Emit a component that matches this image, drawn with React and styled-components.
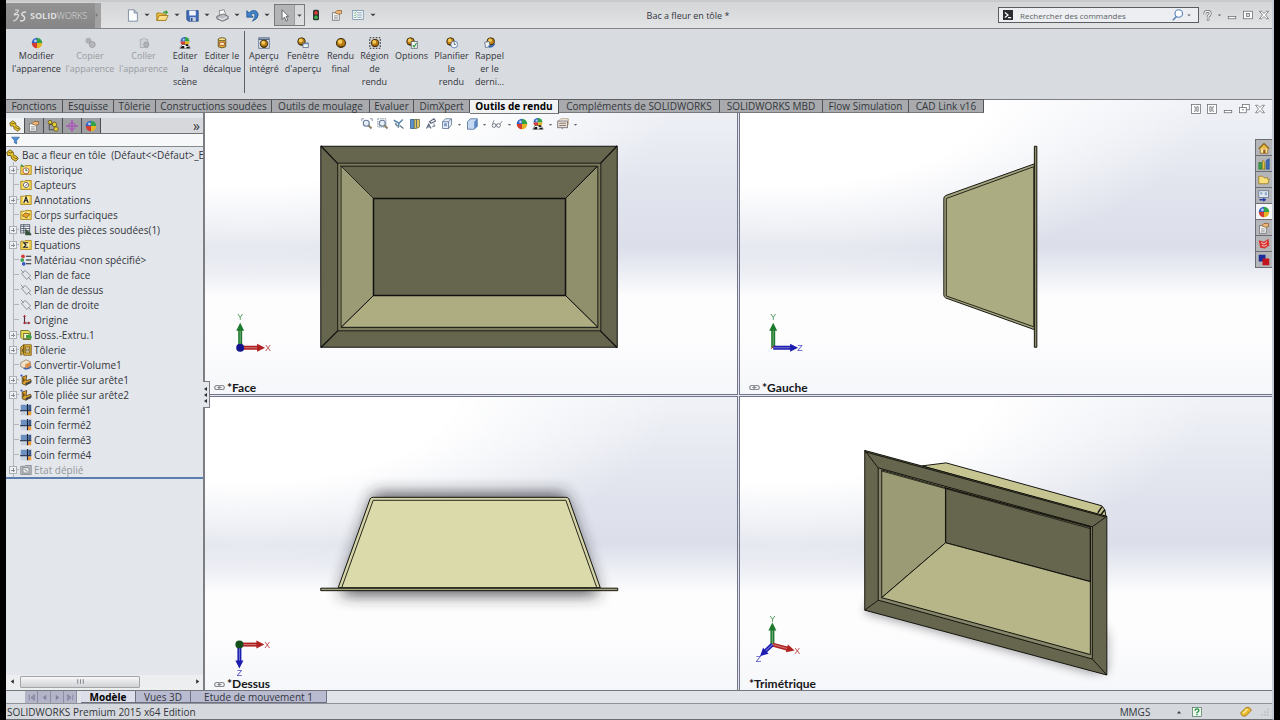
import React, { useState } from "react";
import styled, { createGlobalStyle, css } from "styled-components";

const GlobalStyle = createGlobalStyle`
  * {
    box-sizing: border-box;
  }
  body {
    margin: 0;
    background: #000;
    color: #33363c;
    font-family: "Open Sans", "Noto Sans", sans-serif;
    font-size: 10px;
  }
  button, input {
    font-family: inherit;
    color: inherit;
  }
`;

const AppWindow = styled.div`
  display: grid;
  grid-template-rows: 27px 70px minmax(0, 1fr) 14px 15px;
  height: 100vh;
  min-height: 480px;
  margin: 0 6px;
  border-top: 2px solid #c9cacc;
  border-bottom: 1px solid #6d6f73;
  border-right: 2px solid #c3cad8;
  background: #d8dbe0;
`;

/* ---------- title bar ---------- */

const TitleBar = styled.header`
  display: flex;
  align-items: center;
  background: linear-gradient(#d4d5d7, #e2e3e5);
  border-bottom: 1px solid #83858b;
`;

const Brand = styled.div`
  display: flex;
  align-items: center;
  width: 95px;
  height: 25px;
  padding-left: 6px;
  background: linear-gradient(#929292, #868686);
  color: #dedede;
  font-size: 9px;
  svg {
    margin-right: 3px;
  }
  span {
    font-weight: 300;
  }
  b {
    font-weight: 700;
  }
`;

const BrandToggle = styled.button`
  display: flex;
  align-items: center;
  width: 6px;
  height: 25px;
  margin-left: auto;
  padding: 0;
  border: none;
  background: #a2a2a2;
`;

const QuickAccess = styled.nav`
  display: flex;
  align-items: center;
  height: 22px;
  margin-left: 23px;
`;

const QuickButton = styled.button`
  display: flex;
  align-items: center;
  justify-content: center;
  width: ${(p) => p.$width || 16}px;
  height: 22px;
  padding: 0;
  border: none;
  background: none;
`;

const SelectGroup = styled.div`
  display: flex;
  border: 1px solid #77797d;
  button {
    height: 20px;
  }
  button:first-child {
    background: #b3b4b6;
    border-right: 1px solid #9a9b9e;
  }
`;

const DocTitle = styled.h1`
  flex: 1;
  margin: 0;
  text-align: center;
  font-size: 9px;
  font-weight: 400;
`;

const SearchBox = styled.label`
  display: flex;
  align-items: center;
  width: 201px;
  height: 16px;
  padding: 0 4px;
  border: 1px solid #5b5d63;
  background: #eceef1;
  input {
    flex: 1;
    min-width: 0;
    margin: 0 0 0 7px;
    padding: 0;
    border: none;
    background: none;
    font-size: 8px;
    outline: none;
  }
  input::placeholder {
    color: #5c5f66;
    opacity: 1;
  }
`;

const WindowControls = styled.div`
  display: flex;
  align-items: center;
`;

/* ---------- ribbon ---------- */

const Ribbon = styled.div`
  display: flex;
  align-items: flex-start;
  padding: 2px 4px;
  background: #d8dbe0;
`;

const RibbonButton = styled.button`
  display: flex;
  flex-direction: column;
  align-items: center;
  width: ${(p) => p.$width}px;
  height: 64px;
  padding: 6px 0 0;
  border: none;
  background: none;
  font-size: 9px;
  line-height: 13px;
  white-space: pre;
  svg {
    flex: none;
  }
  &:disabled {
    color: #9a9ca1;
  }
`;

const RibbonSeparator = styled.div`
  width: 1px;
  height: 62px;
  background: #5f6166;
`;

/* ---------- work area ---------- */

const WorkArea = styled.main`
  display: grid;
  grid-template-columns: 199px minmax(0, 1fr);
  grid-template-rows: 14px minmax(0, 1fr);
  min-height: 0;
`;

const CommandTabs = styled.nav`
  display: flex;
  grid-area: 1 / 1 / 2 / 3;
  justify-self: start;
  z-index: 1;
  border-top: 1px solid #606165;
`;

const CommandTab = styled.button`
  width: ${(p) => p.$width}px;
  height: 13px;
  padding: 0 0 1px;
  border: none;
  border-right: 1px solid #515256;
  border-bottom: 1px solid #77787b;
  background: #a8aaad;
  font-size: 10px;
  line-height: 10px;
  white-space: nowrap;
  ${(p) =>
    p.$active &&
    css`
      height: 14px;
      padding-bottom: 2px;
      background: #f1f2f4;
      color: #000;
      font-weight: 700;
    `}
`;

const SidePanel = styled.aside`
  position: relative;
  display: flex;
  flex-direction: column;
  grid-area: 2 / 1 / 3 / 2;
  min-height: 0;
  padding-top: 5px;
  border-right: 2px solid #7c7e84;
  background: #e3e6eb;
`;

const PanelTabs = styled.div`
  display: flex;
  align-items: stretch;
  height: 16px;
  background: #d6d8dc;
  border-bottom: 1px solid #6f7074;
`;

const PanelTab = styled.button`
  display: flex;
  align-items: center;
  justify-content: center;
  width: 19px;
  padding: 0;
  border: none;
  border-right: 1px solid #4c4d50;
  background: ${(p) => (p.$active ? "#f0f1f3" : "#9fa0a3")};
`;

const MoreTabs = styled.button`
  margin-left: auto;
  padding: 0 3px;
  border: none;
  background: none;
  font-size: 14px;
  line-height: 10px;
`;

const FilterBox = styled.label`
  display: flex;
  align-items: center;
  height: 13px;
  padding-left: 5px;
  border-bottom: 1px solid #85878b;
  background: #f7f8f9;
  input {
    flex: 1;
    min-width: 0;
    height: 11px;
    margin: 0;
    padding: 0 4px;
    border: none;
    background: none;
    font-size: 9px;
    outline: none;
  }
`;

const Tree = styled.ul`
  margin: 0;
  padding: 1px 0 0;
  list-style: none;
  border-bottom: 2px solid #5c7db0;
  overflow: hidden;
`;

const TreeRow = styled.li`
  display: flex;
  align-items: center;
  height: ${(p) => (p.$root ? 14 : 15)}px;
  font-size: 10px;
  white-space: pre;
  color: ${(p) => (p.$muted ? "#94979c" : "#33363c")};
  svg {
    flex: none;
    margin-right: ${(p) => (p.$root ? 3 : 2)}px;
  }
`;

const Branch = styled.span`
  position: relative;
  flex: none;
  width: 14px;
  height: 15px;
  background: linear-gradient(#b4b6bb, #b4b6bb) 7px 0 / 1px 100% no-repeat,
    linear-gradient(#b4b6bb, #b4b6bb) 7px 7px / 6px 1px no-repeat;
`;

const Expander = styled.button`
  position: absolute;
  top: 4px;
  left: 3px;
  width: 8px;
  height: 8px;
  padding: 0;
  border: 1px solid #adb0b6;
  background: linear-gradient(#868b94, #868b94) center / 4px 1px no-repeat,
    linear-gradient(#868b94, #868b94) center / 1px 4px no-repeat, #eef0f3;
`;

const PanelHandle = styled.button`
  position: absolute;
  z-index: 2;
  top: 268px;
  right: -7px;
  display: flex;
  align-items: center;
  width: 7px;
  height: 27px;
  padding: 0;
  border: 1px solid #7c7e84;
  border-left: none;
  background: #e3e6eb;
`;

const ScrollBar = styled.div`
  display: flex;
  align-items: center;
  height: 15px;
  margin-top: auto;
  padding-bottom: 2px;
  background: #eceef0;
`;

const ScrollArrow = styled.button`
  display: flex;
  justify-content: center;
  width: 12px;
  padding: 0;
  border: none;
  background: none;
`;

const ScrollThumb = styled.div`
  display: flex;
  align-items: center;
  justify-content: center;
  width: 120px;
  height: 12px;
  margin: 0 auto 0 2px;
  border: 1px solid #a2a4a8;
  border-radius: 1px;
  background: linear-gradient(#f7f7f8, #cfd1d4);
`;

/* ---------- viewports ---------- */

const Viewports = styled.section`
  display: grid;
  grid-area: 1 / 2 / 3 / 3;
  grid-template-columns: 1fr 1fr;
  grid-template-rows: 1fr 1fr;
  gap: 1px;
  min-height: 0;
  border-top: 1px solid #7b7d82;
  background: #e3e5ec;
`;

const Pane = styled.div`
  position: relative;
  min-width: 0;
  min-height: 0;
  overflow: hidden;
  border: 0 solid #74778c;
  border-width: ${(p) => p.$edges};
  background: radial-gradient(
      ellipse 80% 60% at 8% 0,
      #fff 48%,
      rgba(255, 255, 255, 0) 100%
    ),
    linear-gradient(
      #f0f2f7 0,
      #e2e5ee 28%,
      #dcdfea 50%,
      #e9ebf2 57%,
      #fdfdfe 67%,
      #fdfdfe 80%,
      #f6f7fa 100%
    );
`;

const Canvas = styled.svg`
  display: block;
  width: 100%;
  height: 100%;
`;

const ViewName = styled.div`
  position: absolute;
  left: 9px;
  bottom: 0;
  display: flex;
  align-items: center;
  gap: 2px;
  color: #16171a;
  font-family: Lato, sans-serif;
  font-size: 12px;
  font-weight: 700;
  line-height: 12px;
`;

const HeadsUpBar = styled.div`
  position: absolute;
  top: 17px;
  left: 0;
  right: 3px;
  display: flex;
  justify-content: center;
`;

const HudButton = styled.button`
  display: flex;
  align-items: center;
  justify-content: center;
  width: ${(p) => (p.$narrow ? 9 : 16)}px;
  height: 14px;
  padding: 0;
  border: none;
  background: none;
`;

const DocControls = styled.div`
  position: absolute;
  top: 2px;
  right: 4px;
  display: flex;
`;

const TaskPane = styled.div`
  position: absolute;
  top: 39px;
  right: 0;
  width: 17px;
  border: 1px solid #6b6d72;
  border-width: 1px 0 0 1px;
`;

const TaskButton = styled.button`
  display: flex;
  align-items: center;
  justify-content: center;
  width: 16px;
  height: 16px;
  padding: 0;
  border: none;
  border-bottom: 1px solid #6b6d72;
  background: ${(p) => (p.$active ? "#f4f5f7" : "#b5b6b9")};
`;

/* ---------- bottom bars ---------- */

const ModelTabs = styled.nav`
  display: flex;
  align-items: flex-start;
  padding-left: 19px;
  border-top: 1px solid #75777c;
  border-bottom: 1px solid #8f9297;
  background: #e1e4e8;
`;

const Steps = styled.div`
  display: flex;
  margin-right: 4px;
`;

const StepButton = styled.button`
  display: flex;
  align-items: center;
  justify-content: center;
  width: 13px;
  height: 12px;
  padding: 0;
  border: none;
  border-right: 1px solid #8d8ea3;
  background: #b3b4c8;
`;

const ModelTab = styled.button`
  width: ${(p) => p.$width}px;
  height: 12px;
  padding: 0;
  border: none;
  border-right: 1px solid #6f7083;
  border-bottom: 1px solid #6f7083;
  background: ${(p) => (p.$active ? "#dcdeea" : "#b9bbd0")};
  color: ${(p) => (p.$active ? "#000" : "#33363c")};
  font-size: 10px;
  font-weight: ${(p) => (p.$active ? 700 : 400)};
  line-height: 10px;
`;

const StatusBar = styled.footer`
  display: flex;
  align-items: center;
  padding: 0 3px 0 1px;
  background: #d5d8dc;
  font-size: 10px;
  line-height: 14px;
`;

const StatusItem = styled.span`
  display: flex;
  justify-content: center;
  width: ${(p) => p.$width}px;
  margin-left: ${(p) => p.$gap || 0}px;
  &:nth-child(2) {
    margin-left: auto;
  }
`;

/* ---------- icons ---------- */

const Ball = ({ x = 8, y = 8, r = 7 }) => (
  <g transform={`translate(${x} ${y}) scale(${r})`}>
    <path d="M0 0V-1A1 1 0 0 0-1 0Z" fill="#2f62c9" />
    <path d="M0 0V-1A1 1 0 0 1 1 0Z" fill="#2fa24a" />
    <path d="M0 0H1A1 1 0 0 1 0 1Z" fill="#e6b422" />
    <path d="M0 0H-1A1 1 0 0 0 0 1Z" fill="#d63b2f" />
    <circle cx="-.3" cy="-.4" r=".25" fill="#fff" opacity=".7" />
  </g>
);

const Gold = ({ x = 8, y = 8, r = 5 }) => (
  <g transform={`translate(${x} ${y}) scale(${r})`}>
    <circle r="1" fill="#b97c12" stroke="#3d2f14" strokeWidth=".25" />
    <circle cx="-.2" cy="-.3" r=".5" fill="#f3c95a" />
    <path d="M-.8 .5Q0 1 .8 .5L.5 .9Q0 1.1-.5 .9Z" fill="#453215" />
  </g>
);

const Folder = ({ children }) => (
  <>
    <path d="M1 3H6L7 2H15V14H1Z" fill="#f4d34f" stroke="#9c7b16" />
    <rect x="4" y="4" width="8" height="8" fill="#fbf0b0" />
    {children}
  </>
);

const Part = () => (
  <>
    <path
      d="M1 4L5 1L9 4V7L13 9L15 12L12 15L7 12L6 8L2 8Z"
      fill="#eec92e"
      stroke="#59480b"
    />
    <path d="M3 4L5 5L8 4M8 9L12 12L14 11" fill="none" stroke="#59480b" />
  </>
);

const Sheet = () => (
  <>
    <rect x="2" y="5" width="9" height="10" fill="#f5f5f3" stroke="#6c6d70" />
    <path d="M4 9H9M4 11H9M4 13H9" stroke="#8c8d92" />
    <path d="M5 5L8 2H14V6L10 7Z" fill="#eeb578" stroke="#875c2c" />
  </>
);

const Magnifier = () => (
  <>
    <circle cx="7" cy="7" r="4" fill="#e5eef9" stroke="#687b97" strokeWidth="1.5" />
    <path d="M10 10L14 14" stroke="#8e8268" strokeWidth="2.5" />
  </>
);

const icons = {
  newDoc: <path d="M3 1H10L14 5V15H3ZM10 1V5H14" fill="#fbfcfd" stroke="#6d7f98" />,
  open: (
    <>
      <path d="M1 14V5H6L7 6H12V14Z" fill="#f0c13c" stroke="#9b7412" />
      <path d="M1 14L4 8H15L12 14Z" fill="#fae08a" stroke="#9b7412" />
      <path d="M8 5Q9 2 12 3V1L15 4L12 7V5Q10 4 8 5Z" fill="#3e9f3a" />
    </>
  ),
  save: (
    <>
      <path d="M1 2H15V15H3L1 13Z" fill="#3f6cb8" stroke="#2a4a88" />
      <rect x="4" y="2" width="8" height="6" fill="#f1f5fb" />
      <rect x="5" y="10" width="7" height="5" fill="#c7d0df" />
      <rect x="6" y="11" width="2" height="4" fill="#2a4a88" />
    </>
  ),
  print: (
    <>
      <path d="M5 8L4 2L10 1L12 7" fill="#fff" stroke="#777" />
      <path d="M1 9L9 6L15 9V12L8 15L1 12Z" fill="#b9bcc2" stroke="#5d6066" />
      <path d="M4 11L8 13L13 10" fill="none" stroke="#fff" />
    </>
  ),
  undo: (
    <path
      d="M1 2V10H9L6 7Q10 4 11 7Q12 10 8 15Q15 12 15 7Q14 1 8 2Q6 2 4 5Z"
      fill="#3f82c8"
      stroke="#225793"
    />
  ),
  cursor: <path d="M5 1V13L8 10L10 15L12 14L10 9H13Z" fill="#fff" stroke="#505256" />,
  traffic: (
    <>
      <rect x="4" y="1" width="8" height="14" rx="2" fill="#2e3531" />
      <circle cx="8" cy="5" r="2.5" fill="#e03a35" />
      <circle cx="8" cy="11" r="2.5" fill="#34b14a" />
    </>
  ),
  sheet: <Sheet />,
  checklist: (
    <>
      <rect x="1" y="2" width="14" height="12" fill="#f5f9fc" stroke="#6989a6" />
      <path d="M7 5H13M7 8H13M7 11H13" stroke="#6989a6" />
      <path d="M3 5L4 6L6 3M3 8L4 9L6 7M3 11L4 12L6 10" fill="none" stroke="#3c9a4b" />
    </>
  ),
  caret: <path d="M4 6H12L8 10Z" fill="#3e4045" />,
  smallCaret: <path d="M5 7H11L8 10Z" fill="#65686f" />,
  prompt: (
    <>
      <rect width="16" height="16" fill="#2a2c30" />
      <path d="M3 4L8 8L3 12M8 12H13" fill="none" stroke="#fff" strokeWidth="2" />
    </>
  ),
  lookup: (
    <>
      <circle cx="9" cy="6" r="5" fill="#fff" stroke="#5580b5" strokeWidth="1.5" />
      <path d="M6 10L1 15" stroke="#5580b5" strokeWidth="2" />
    </>
  ),
  question: (
    <>
      <path
        d="M4 6Q4 2 8 2Q12 2 12 5Q12 7 9 9V11"
        fill="none"
        stroke="#66696f"
        strokeWidth="4"
      />
      <path d="M4 6Q4 2 8 2Q12 2 12 5Q12 7 9 9V11" fill="none" stroke="#f4f4f5" strokeWidth="2" />
      <circle cx="9" cy="14" r="1.5" fill="#f4f4f5" stroke="#66696f" />
    </>
  ),
  minimize: <rect x="3" y="10" width="10" height="3" fill="#fff" stroke="#66696f" />,
  maximize: (
    <>
      <rect x="2" y="3" width="12" height="10" fill="#fff" stroke="#66696f" />
      <rect x="6" y="6" width="4" height="4" fill="#d8dbe0" stroke="#66696f" />
    </>
  ),
  close: (
    <path
      d="M2 3H5L8 6L11 3H14L10 8L14 13H11L8 10L5 13H2L6 8Z"
      fill="#fff"
      stroke="#66696f"
    />
  ),
  restore: (
    <>
      <rect x="6" y="2" width="9" height="7" fill="#fff" stroke="#66696f" />
      <rect x="2" y="6" width="9" height="7" fill="#fff" stroke="#66696f" />
      <path d="M5 9H8" stroke="#66696f" />
    </>
  ),
  tileIn: (
    <>
      <rect x="2" y="2" width="12" height="12" fill="#fff" stroke="#66696f" />
      <path d="M5 5H7V11H5M9 5H11V11H9Z" fill="none" stroke="#66696f" />
    </>
  ),
  tileOut: (
    <>
      <rect x="2" y="2" width="12" height="12" fill="#fff" stroke="#66696f" />
      <path d="M5 5H7V11H5ZM11 5H9V11H11" fill="none" stroke="#66696f" />
    </>
  ),
  ball: <Ball />,
  copyLook: (
    <>
      <circle cx="6" cy="5" r="4" fill="#aeb0b4" />
      <circle cx="11" cy="10" r="4" fill="#b5b7ba" stroke="#96989c" />
    </>
  ),
  pasteLook: (
    <>
      <path d="M3 3H6L8 1L10 3H13V14H3Z" fill="#cfd1d4" stroke="#a4a6aa" />
      <circle cx="11" cy="10" r="3.5" fill="#b0b2b6" stroke="#9a9ca0" />
    </>
  ),
  scene: (
    <>
      <Ball y={6} r={6} />
      <path d="M1 15L4 10H12L15 15Z" fill="#f7f7f7" stroke="#333" strokeWidth=".7" />
      <path d="M4 12H7V15H2ZM9 10H12V12H9ZM10 13H14V15H10Z" fill="#111" />
    </>
  ),
  decal: (
    <>
      <path d="M3 3V13Q8 16 13 13V3Z" fill="#e0b43c" stroke="#4a3c12" />
      <ellipse cx="8" cy="3" rx="5" ry="2" fill="#f8e28c" stroke="#4a3c12" />
      <rect x="5" y="7" width="6" height="4" fill="#fff4c8" stroke="#a13a22" />
    </>
  ),
  preview: (
    <>
      <rect x="1" y="1" width="14" height="14" fill="#dfe4ec" stroke="#54657e" />
      <path d="M1 3H15" stroke="#54657e" strokeWidth="2" />
      <Gold y={9} r={5} />
    </>
  ),
  previewWindow: (
    <>
      <Gold x={6} y={6} r={5} />
      <rect x="8" y="8" width="7" height="6" fill="#eef2f7" stroke="#54657e" />
      <path d="M8 9H15" stroke="#3b66a8" />
    </>
  ),
  gold: <Gold r={6} />,
  region: (
    <>
      <Gold r={5} />
      <rect x="1" y="1" width="14" height="14" fill="none" stroke="#222" strokeWidth="1.5" strokeDasharray="2 2" />
    </>
  ),
  goldOptions: (
    <>
      <Gold x={6} y={6} r={5} />
      <rect x="7" y="6" width="8" height="9" fill="#f4f8f4" stroke="#56606c" />
      <path d="M9 11L11 13L14 8" fill="none" stroke="#2c9440" strokeWidth="1.5" />
    </>
  ),
  goldClock: (
    <>
      <Gold x={6} y={6} r={5} />
      <circle cx="11" cy="10" r="4.5" fill="#f3f7fc" stroke="#456ba2" />
      <path d="M11 7V10H13" fill="none" stroke="#345" />
    </>
  ),
  goldRecall: (
    <>
      <Gold x={9} y={6} r={5} />
      <path d="M1 7L7 6L8 13L2 14Z" fill="#eff2f6" stroke="#54657e" />
      <path d="M6 12Q11 15 14 9" fill="none" stroke="#2b65b8" strokeWidth="2" />
    </>
  ),
  part: <Part />,
  config: (
    <>
      <path d="M3 2V13H9M3 6H9" fill="none" stroke="#2f3034" />
      <circle cx="4" cy="3" r="2.5" fill="#e5cf3b" stroke="#59480b" />
      <circle cx="10" cy="6" r="3" fill="#e5cf3b" stroke="#59480b" />
      <circle cx="12" cy="12" r="3" fill="#e5cf3b" stroke="#59480b" />
    </>
  ),
  target: (
    <g fill="none" stroke="#b23fc0">
      <circle cx="8" cy="8" r="4.5" />
      <path d="M8 0V16M0 8H16" strokeWidth="1.5" />
    </g>
  ),
  funnel: <path d="M1 2H15L10 8V14L6 12V8Z" fill="#4e8fd6" stroke="#23568f" />,
  history: (
    <Folder>
      <circle cx="8" cy="9" r="4" fill="#fff" stroke="#a42c2c" />
      <path d="M8 6V9H10M1 1L5 4" fill="none" stroke="#2d8c3a" strokeWidth="1.5" />
    </Folder>
  ),
  sensors: (
    <Folder>
      <circle cx="8" cy="8" r="3.5" fill="#fff" stroke="#444" />
      <path d="M7 10L10 6" stroke="#444" />
    </Folder>
  ),
  notes: (
    <Folder>
      <path d="M5 12L8 4L11 12M6 9H10" fill="none" stroke="#1d1d20" strokeWidth="1.5" />
    </Folder>
  ),
  surfaces: (
    <Folder>
      <path d="M3 9L7 5L13 7L9 12Z" fill="#eaa02c" stroke="#754d0c" />
    </Folder>
  ),
  cutList: (
    <>
      <rect x="1" y="1" width="12" height="11" fill="#f2f4f8" stroke="#3c4657" />
      <path d="M1 3H13M1 6H13M1 9H13M5 1V12" stroke="#3c4657" />
      <path d="M7 6L15 13V15H7Z" fill="#37523a" />
    </>
  ),
  equations: (
    <Folder>
      <path d="M11 5H5L8 8L5 11H11" fill="none" stroke="#1d1d20" strokeWidth="1.5" />
    </Folder>
  ),
  material: (
    <>
      <circle cx="4" cy="3" r="2.5" fill="#d23a3a" />
      <circle cx="3" cy="8" r="2.5" fill="#3a9f47" />
      <circle cx="5" cy="13" r="2.5" fill="#3558c2" />
      <path d="M8 3H15M8 8H15M8 13H15" stroke="#222" strokeWidth="1.5" />
    </>
  ),
  plane: (
    <path d="M2 6L7 2L14 9L9 14ZM1 1L5 5M11 11L15 15" fill="none" stroke="#74777e" />
  ),
  origin: (
    <>
      <path d="M6 2V12H13" fill="none" stroke="#5e2630" strokeWidth="1.5" />
      <path d="M4 4L6 1L8 4M11 10L14 12L11 14" fill="#b32b34" />
      <circle cx="6" cy="12" r="1.5" fill="#b32b34" />
    </>
  ),
  extrude: (
    <>
      <path d="M1 2H11L14 5V14H4L1 11Z" fill="#e9dc55" stroke="#4c511a" />
      <rect x="5" y="6" width="7" height="7" fill="#fafbd8" stroke="#4c511a" />
      <path d="M8 8H13V6L16 11L13 15V12H8Z" fill="#39a23f" />
    </>
  ),
  sheetMetal: (
    <>
      <path d="M1 4L5 1V12L1 15ZM5 1H15V15H5Z" fill="#e9b83a" stroke="#65490e" />
      <rect x="7" y="4" width="6" height="8" fill="#f8e6a1" stroke="#65490e" />
      <path d="M9 6V10M11 6V10M3 6V11" stroke="#333" />
    </>
  ),
  convert: (
    <>
      <path d="M1 5L8 1L14 4V10L7 13L1 10Z" fill="#f0e2c8" stroke="#8b765a" />
      <path d="M7 7L14 4V10L7 13Z" fill="#d98f4a" />
      <path d="M5 12Q10 15 15 10" fill="none" stroke="#4765a6" strokeWidth="2" />
    </>
  ),
  bend: (
    <>
      <path d="M3 4L9 2L8 9L14 7L15 10L8 15L3 13Z" fill="#e8a92c" stroke="#402f0d" />
      <path d="M7 12L15 9V12L8 15Z" fill="#444" />
      <path d="M5 5V11M4 8H7" stroke="#402f0d" />
      <circle cx="2" cy="2" r="1.5" fill="#3558c2" />
    </>
  ),
  corner: (
    <>
      <path d="M1 1H10V9H1Z" fill="#6c8fc2" />
      <path d="M11 1H15V9H11Z" fill="#3f5c8c" />
      <path d="M1 10H9V15H1Z" fill="#c6d1e2" />
      <path d="M10 10H15V15H10Z" fill="#f09a33" />
      <path d="M10 0V15M0 9H15" stroke="#17233a" strokeWidth="1.5" />
    </>
  ),
  flat: (
    <>
      <path d="M1 3H6L7 2H15V14H1Z" fill="#b9bcc2" stroke="#7d8087" />
      <rect x="4" y="5" width="8" height="7" fill="#e7e8ea" stroke="#7d8087" />
      <path d="M6 7L10 10" stroke="#666" />
    </>
  ),
  zoomFit: (
    <>
      <Magnifier />
      <path d="M1 4V1H4M12 1H15V4" fill="none" stroke="#687b97" />
    </>
  ),
  zoomArea: (
    <>
      <rect x="1" y="1" width="11" height="11" fill="none" stroke="#687b97" strokeDasharray="2 1" />
      <Magnifier />
    </>
  ),
  previous: (
    <>
      <path d="M1 3L8 7L13 2M8 7L7 13" fill="none" stroke="#5c87ae" strokeWidth="2" />
      <path d="M9 10L14 14M3 7L6 11" stroke="#708090" strokeWidth="2" />
    </>
  ),
  section: (
    <>
      <path d="M2 2H7V14H2Z" fill="#5b93ce" stroke="#2c5785" />
      <path d="M7 2H14V12L10 14H7Z" fill="#e0c35e" stroke="#5e6e49" />
      <path d="M10 2V13" stroke="#2c5785" />
    </>
  ),
  dynamic: (
    <>
      <path d="M2 14L5 8L8 14M3 12H7M6 5L12 1L14 4L8 7Z" fill="none" stroke="#5f6b7e" strokeWidth="1.5" />
      <path d="M9 12L14 10M12 7V12" stroke="#5f6b7e" />
    </>
  ),
  cubes: (
    <>
      <path d="M2 5L6 1H14V9L10 14H2Z" fill="#e6edf7" stroke="#50698c" />
      <path d="M2 5H10V14M10 5L14 1" fill="none" stroke="#50698c" />
      <rect x="4" y="7" width="4" height="4" fill="#7f9fce" />
    </>
  ),
  cube: (
    <>
      <path d="M2 5L6 1H15V11L11 15H2Z" fill="#c5d8f1" stroke="#44648f" />
      <path d="M11 5V15L15 11V1Z" fill="#5a86c4" />
    </>
  ),
  glasses: (
    <>
      <circle cx="4" cy="10" r="2.5" fill="none" stroke="#6b7280" strokeWidth="1.2" />
      <circle cx="10" cy="10" r="2.5" fill="none" stroke="#6b7280" strokeWidth="1.2" />
      <path d="M2 8L4 3M12 8L15 4M6 9H8" stroke="#6b7280" fill="none" />
    </>
  ),
  screen: (
    <>
      <rect x="1" y="4" width="13" height="9" fill="#f1dfcf" stroke="#5b5f66" />
      <path d="M3 7H12M3 10H12M7 13V15" stroke="#5b5f66" />
      <path d="M2 4L5 1H15V9" fill="none" stroke="#a98555" />
    </>
  ),
  home: (
    <>
      <path d="M3 8V15H13V8" fill="#fbe7a0" stroke="#8a6414" />
      <path d="M1 9L8 2L15 9" fill="#e8b94a" stroke="#8a6414" strokeWidth="1.5" />
      <rect x="7" y="10" width="3" height="5" fill="#9a5b1e" />
    </>
  ),
  library: (
    <>
      <path d="M1 6H5V15H1ZM7 8H9V15H7Z" fill="#38a04a" stroke="#1f5f2b" strokeWidth=".7" />
      <path d="M6 3L9 5V15H6Z" fill="#e0c33a" stroke="#7a6614" strokeWidth=".7" />
      <path d="M11 3L15 1V15H11Z" fill="#3c6cbc" stroke="#1f3f78" strokeWidth=".7" />
    </>
  ),
  folder: <path d="M1 13V3H6L8 5H13V7H15L13 13Z" fill="#f8dd7c" stroke="#93701a" />,
  palette: (
    <>
      <rect x="1" y="1" width="13" height="9" fill="#e2e9f2" stroke="#5b6d87" />
      <path d="M3 3H6V6H3ZM9 3H12V7H9Z" fill="#8fa9c9" />
      <path d="M2 12H7V10L11 13L7 16V14H2Z" fill="#2237a8" />
    </>
  ),
  forum: (
    <>
      <path d="M1 3L8 5L14 1L15 10L9 14L3 13Z" fill="#d8302c" />
      <path d="M4 6L8 8L12 5M5 10L9 11L12 9" fill="none" stroke="#fff" />
    </>
  ),
  squares: (
    <>
      <rect x="1" y="1" width="9" height="9" fill="#1c2b9a" />
      <rect x="6" y="6" width="9" height="9" fill="#c3161c" />
    </>
  ),
  first: <path d="M4 3V13M13 3L7 8L13 13Z" fill="#9294ac" stroke="#80829c" strokeWidth="1.5" />,
  prev: <path d="M11 3L5 8L11 13Z" fill="#80829c" />,
  next: <path d="M5 3L11 8L5 13Z" fill="#80829c" />,
  last: <path d="M12 3V13M3 3L9 8L3 13Z" fill="#9294ac" stroke="#80829c" strokeWidth="1.5" />,
  arrowLeft: <path d="M11 3L4 8L11 13Z" fill="#2b2d31" />,
  arrowRight: <path d="M5 3L12 8L5 13Z" fill="#2b2d31" />,
  grip: <path d="M3 4V12M8 4V12M13 4V12" stroke="#74777c" strokeWidth="1.5" />,
  dots: <path d="M9 1L6 3L9 5ZM9 7L6 9L9 11ZM9 13L6 15L9 17Z" fill="#2b2d31" />,
  chain: (
    <g fill="#f4f4f4" stroke="#85888e" strokeWidth="1.5">
      <rect x="1" y="5" width="8" height="6" rx="3" />
      <rect x="7" y="5" width="8" height="6" rx="3" />
      <path d="M5 8H11" />
    </g>
  ),
  up: <path d="M4 11L8 6L12 11Z" fill="#3a3c40" />,
  help: (
    <>
      <rect x="1" y="1" width="14" height="14" fill="#eef8ef" stroke="#3d6b4b" />
      <path d="M5 6Q5 3 8 3Q11 3 11 6Q11 7 8 9V10M8 11V13" fill="none" stroke="#1c8a36" strokeWidth="2" />
    </>
  ),
  tag: (
    <>
      <path d="M1 9L8 2Q14 1 15 6L8 13Q2 15 1 9Z" fill="#edb92c" stroke="#93670c" />
      <path d="M4 10L10 4" stroke="#fff0b4" strokeWidth="2" />
    </>
  ),
  gripCorner: (
    <path
      d="M13 3H15V5H13ZM8 8H10V10H8ZM13 8H15V10H13ZM3 13H5V15H3ZM8 13H10V15H8ZM13 13H15V15H13Z"
      fill="#9fa2a7"
    />
  ),
};

const Icon = ({ name, size = 12 }) => (
  <svg width={size} height={size} viewBox="0 0 16 16" aria-hidden="true">
    {icons[name]}
  </svg>
);

/* ---------- data ---------- */

const quickActions = [
  ["newDoc", "Nouveau"],
  ["open", "Ouvrir"],
  ["save", "Enregistrer"],
  ["print", "Imprimer"],
  ["undo", "Annuler"],
];

const ribbonActions = [
  { icon: "ball", label: "Modifier\nl'apparence", width: 53 },
  { icon: "copyLook", label: "Copier\nl'apparence", width: 54, disabled: true },
  { icon: "pasteLook", label: "Coller\nl'apparence", width: 53, disabled: true },
  { icon: "scene", label: "Editer\nla\nscène", width: 30 },
  { icon: "decal", label: "Editer le\ndécalque", width: 44 },
  null,
  { icon: "preview", label: "Aperçu\nintégré", width: 38 },
  { icon: "previewWindow", label: "Fenêtre\nd'aperçu", width: 40 },
  { icon: "gold", label: "Rendu\nfinal", width: 35 },
  { icon: "region", label: "Région\nde\nrendu", width: 33 },
  { icon: "goldOptions", label: "Options", width: 41 },
  { icon: "goldClock", label: "Planifier\nle\nrendu", width: 39 },
  { icon: "goldRecall", label: "Rappel\ner le\nderni...", width: 37 },
];

const commandTabs = [
  ["Fonctions", 57],
  ["Esquisse", 51],
  ["Tôlerie", 42],
  ["Constructions soudées", 116],
  ["Outils de moulage", 98],
  ["Evaluer", 44],
  ["DimXpert", 56],
  ["Outils de rendu", 89],
  ["Compléments de SOLIDWORKS", 161],
  ["SOLIDWORKS MBD", 103],
  ["Flow Simulation", 86],
  ["CAD Link v16", 75],
];

const panelTabs = ["part", "sheet", "config", "target", "ball"];

const treeItems = [
  { icon: "history", label: "Historique", open: true },
  { icon: "sensors", label: "Capteurs" },
  { icon: "notes", label: "Annotations", open: true },
  { icon: "surfaces", label: "Corps surfaciques" },
  { icon: "cutList", label: "Liste des pièces soudées(1)", open: true },
  { icon: "equations", label: "Equations", open: true },
  { icon: "material", label: "Matériau <non spécifié>" },
  { icon: "plane", label: "Plan de face" },
  { icon: "plane", label: "Plan de dessus" },
  { icon: "plane", label: "Plan de droite" },
  { icon: "origin", label: "Origine" },
  { icon: "extrude", label: "Boss.-Extru.1", open: true },
  { icon: "sheetMetal", label: "Tôlerie", open: true },
  { icon: "convert", label: "Convertir-Volume1" },
  { icon: "bend", label: "Tôle pliée sur arête1", open: true },
  { icon: "bend", label: "Tôle pliée sur arête2", open: true },
  { icon: "corner", label: "Coin fermé1" },
  { icon: "corner", label: "Coin fermé2" },
  { icon: "corner", label: "Coin fermé3" },
  { icon: "corner", label: "Coin fermé4" },
  { icon: "flat", label: "Etat déplié", open: true, muted: true },
];

const hudItems = [
  "zoomFit",
  "zoomArea",
  "previous",
  "section",
  "dynamic",
  "cubes",
  "smallCaret",
  "cube",
  "smallCaret",
  "glasses",
  "smallCaret",
  "ball",
  "scene",
  "smallCaret",
  "screen",
  "smallCaret",
];

const taskItems = [
  "home",
  "library",
  "folder",
  "palette",
  "ball",
  "sheet",
  "forum",
  "squares",
];

const modelTabs = [
  ["Modèle", 55],
  ["Vues 3D", 55],
  ["Etude de mouvement 1", 136],
];

/* ---------- drawings ---------- */

const axisColors = { X: "#b02020", Y: "#1d7a2c", Z: "#1c1cb0" };

// angle is measured clockwise from the right
const Axis = ({ name, angle, length = 18, tx, ty }) => (
  <>
    <g transform={`rotate(${angle})`}>
      <rect y="-2" width={length} height="4" fill={axisColors[name]} />
      <rect y="-.5" width={length} height="1" fill="#fff" opacity=".4" />
      <path d={`M${length - 1}-4L${length + 7} 0L${length - 1} 4Z`} fill={axisColors[name]} />
    </g>
    <text
      x={tx}
      y={ty}
      fill={axisColors[name]}
      fontFamily="Liberation Sans, sans-serif"
      fontSize="9"
      textAnchor="middle"
      opacity=".8"
    >
      {name}
    </text>
  </>
);

const FrontDrawing = () => (
  <Canvas viewBox="205 99 532 295">
    <g stroke="#111" strokeLinejoin="round">
      <rect x="320" y="145.5" width="298" height="202" fill="#66664e" />
      <path d="M320 145L340 166M618 145L598 166M320 348L340 328M618 348L598 328" strokeWidth="1.3" />
      <rect x="337" y="162.5" width="264.5" height="168.5" fill="#7a7a5c" strokeWidth=".9" />
      <path d="M340 165.5H598L566 198H373Z" fill="#66664e" strokeWidth=".9" />
      <path d="M340.5 165.5L373 198V295.5L340.5 327.5Z" fill="#9b9b75" strokeWidth=".7" />
      <path d="M598.5 165.5L566 198V295.5L598.5 327.5Z" fill="#90906c" strokeWidth=".9" />
      <path d="M340.5 327.5L373 295.5H566L598.5 327.5Z" fill="#aead82" />
      <rect x="373" y="198" width="193" height="97.5" fill="#66664e" strokeWidth="1.5" />
    </g>
    <g transform="translate(239 348)">
      <Axis name="Y" angle={-90} tx={0} ty={-28} />
      <Axis name="X" angle={0} tx={28} ty={3} />
      <circle r="4" fill="#14148c" />
    </g>
  </Canvas>
);

const LeftDrawing = () => (
  <Canvas viewBox="740 99 532 295">
    <g stroke="#15150f" strokeLinejoin="round">
      <path d="M1035 163L945.5 195Q943.5 196 943.5 198V295Q943.5 297 945.5 298L1035 330Z" fill="#a5a57f" />
      <path d="M1034 166L946 198V296L1034 327Z" fill="#acac82" strokeWidth=".9" />
      <rect x="1034.5" y="145.5" width="2.5" height="202" fill="#8c8c68" />
    </g>
    <g transform="translate(772 348)">
      <Axis name="Y" angle={-90} tx={0} ty={-28} />
      <Axis name="Z" angle={0} tx={27} ty={3} />
      <path d="M-2 1L1-2" stroke="#b02020" />
    </g>
  </Canvas>
);

const TopDrawing = () => (
  <Canvas viewBox="205 397 532 294">
    <filter id="topShadow" x="-20%" y="-30%" width="140%" height="160%">
      <feGaussianBlur stdDeviation="8" />
    </filter>
    <path
      d="M340 595L374 494H565L599 595Z"
      fill="#26262c"
      opacity=".8"
      filter="url(#topShadow)"
    />
    <g stroke="#15150f" strokeLinejoin="round">
      <path d="M338 588L370 499Q371 497.5 373 497.5H566Q568 497.5 569 499L600.5 588Z" fill="#d5d4a8" />
      <path d="M341.5 588L373 500.5H566L597 588Z" fill="#dbdaab" strokeWidth=".9" />
      <rect x="320.5" y="588.5" width="297.5" height="2.5" fill="#a3a37c" />
    </g>
    <g transform="translate(239 645)">
      <Axis name="X" angle={0} tx={28} ty={3} />
      <Axis name="Z" angle={90} length={17} tx={0} ty={31} />
      <circle r="4" fill="#14501c" />
    </g>
  </Canvas>
);

const TrimetricDrawing = () => (
  <Canvas viewBox="740 397 532 294">
    <filter id="triShadow" x="-20%" y="-20%" width="140%" height="140%">
      <feGaussianBlur stdDeviation="5" />
    </filter>
    <path
      d="M870 600L1104 664V620L1109 640L1108 672L1092 674L864 613Z"
      fill="#3a3a40"
      opacity=".45"
      filter="url(#triShadow)"
    />
    <g stroke="#15150f" strokeLinejoin="round">
      <path d="M922 466L946 463L1102 506Q1106 509 1106 516L1098 515Z" fill="#c6c592" />
      <path d="M1098 513L1102 507M1101 515L1105 510" strokeWidth="1.5" />
      <path d="M864.5 450.5L1107 516.5V675.5L864.5 610.5Z" fill="#66664e" />
      <path d="M865 452L1105 517" strokeWidth="1" />
      <path d="M878 468L1092.5 527V659.5L878 600.5Z" fill="#86866a" />
      <path d="M881.5 470L945.5 488V543L881.5 598Z" fill="#9b9b75" strokeWidth=".9" />
      <path d="M945.5 488L1090.5 527V582L945.5 543Z" fill="#66664e" strokeWidth="1.3" />
      <path d="M881.5 598L945.5 543L1090.5 582V655Z" fill="#b7b689" />
      <path d="M864.5 450.5L878 468M1107 516.5L1092.5 527M1107 675.5L1092.5 659.5M864.5 610.5L878 600.5" />
      <path d="M881 471L1091 529" fill="none" strokeWidth=".8" />
    </g>
    <g transform="translate(772 645)">
      <Axis name="Y" angle={-90} length={15} tx={0} ty={-23} />
      <Axis name="X" angle={15} length={16} tx={25} ty={9} />
      <Axis name="Z" angle={137} length={10} tx={-14} ty={17} />
    </g>
  </Canvas>
);

const BrandMark = () => (
  <svg width="15" height="15" viewBox="0 0 15 15" fill="none" stroke="#dedede">
    <path d="M3 2H6Q7 4 4 5Q1 7 3 7Q8 5 6 9Q4 13 1 13" strokeWidth="1.2" />
    <path d="M14 4Q9 4 10 7Q14 9 12 12Q11 13 8 13" strokeWidth="1.5" />
  </svg>
);

const App = () => {
  const [commandTab, setCommandTab] = useState("Outils de rendu");
  const [modelTab, setModelTab] = useState("Modèle");
  const [search, setSearch] = useState("");
  const [filter, setFilter] = useState("");

  return (
    <>
      <GlobalStyle />
      <AppWindow>
        <TitleBar>
          <Brand>
            <BrandMark />
            <b>SOLID</b>
            <span>WORKS</span>
            <BrandToggle aria-label="Menu">
              <svg width="4" height="6" viewBox="0 0 4 6">
                <path d="M1 0L4 3L1 6Z" fill="#77797c" />
              </svg>
            </BrandToggle>
          </Brand>
          <QuickAccess>
            {quickActions.map(([icon, label]) => (
              <React.Fragment key={icon}>
                <QuickButton aria-label={label}>
                  <Icon name={icon} size={13} />
                </QuickButton>
                <QuickButton $width={14} aria-label={`${label}, options`}>
                  <Icon name="caret" size={10} />
                </QuickButton>
              </React.Fragment>
            ))}
            <SelectGroup>
              <QuickButton $width={20} aria-label="Sélectionner">
                <Icon name="cursor" size={13} />
              </QuickButton>
              <QuickButton $width={9} aria-label="Sélectionner, options">
                <Icon name="caret" size={9} />
              </QuickButton>
            </SelectGroup>
            <QuickButton $width={21} aria-label="Reconstruire">
              <Icon name="traffic" />
            </QuickButton>
            <QuickButton $width={21} aria-label="Propriétés">
              <Icon name="sheet" />
            </QuickButton>
            <QuickButton $width={21} aria-label="Options">
              <Icon name="checklist" />
            </QuickButton>
            <QuickButton $width={10} aria-label="Options, liste">
              <Icon name="caret" size={10} />
            </QuickButton>
          </QuickAccess>
          <DocTitle>Bac a fleur en tôle *</DocTitle>
          <SearchBox>
            <Icon name="prompt" size={10} />
            <input
              type="text"
              aria-label="Rechercher des commandes"
              placeholder="Rechercher des commandes"
              value={search}
              onChange={(e) => setSearch(e.target.value)}
            />
            <Icon name="lookup" />
            <Icon name="smallCaret" size={10} />
          </SearchBox>
          <WindowControls>
            <QuickButton aria-label="Aide">
              <Icon name="question" size={11} />
            </QuickButton>
            <QuickButton $width={9} aria-label="Aide, options">
              <Icon name="smallCaret" size={10} />
            </QuickButton>
            <QuickButton aria-label="Réduire">
              <Icon name="minimize" />
            </QuickButton>
            <QuickButton aria-label="Agrandir">
              <Icon name="maximize" />
            </QuickButton>
            <QuickButton aria-label="Fermer">
              <Icon name="close" />
            </QuickButton>
          </WindowControls>
        </TitleBar>

        <Ribbon>
          {ribbonActions.map((item) =>
            item ? (
              <RibbonButton key={item.label} $width={item.width} disabled={item.disabled}>
                <Icon name={item.icon} />
                {item.label}
              </RibbonButton>
            ) : (
              <RibbonSeparator key="separator" />
            )
          )}
        </Ribbon>

        <WorkArea>
          <CommandTabs>
            {commandTabs.map(([label, width]) => (
              <CommandTab
                key={label}
                $width={width}
                $active={label === commandTab}
                onClick={() => setCommandTab(label)}
              >
                {label}
              </CommandTab>
            ))}
          </CommandTabs>

          <SidePanel>
            <PanelTabs>
              {panelTabs.map((icon, i) => (
                <PanelTab key={icon} $active={i === 0} aria-label={icon}>
                  <Icon name={icon} />
                </PanelTab>
              ))}
              <MoreTabs>»</MoreTabs>
            </PanelTabs>
            <FilterBox>
              <Icon name="funnel" size={9} />
              <input
                type="text"
                aria-label="Filtre"
                value={filter}
                onChange={(e) => setFilter(e.target.value)}
              />
            </FilterBox>
            <Tree>
              <TreeRow $root>
                <Icon name="part" size={13} />
                {"Bac a fleur en tôle  (Défaut<<Défaut>_E"}
              </TreeRow>
              {treeItems.map((item) => (
                <TreeRow key={item.label} $muted={item.muted}>
                  <Branch>{item.open && <Expander aria-label="Développer" />}</Branch>
                  <Icon name={item.icon} />
                  {item.label}
                </TreeRow>
              ))}
            </Tree>
            <ScrollBar>
              <ScrollArrow aria-label="Défiler à gauche">
                <Icon name="arrowLeft" size={7} />
              </ScrollArrow>
              <ScrollThumb>
                <Icon name="grip" size={9} />
              </ScrollThumb>
              <ScrollArrow aria-label="Défiler à droite">
                <Icon name="arrowRight" size={7} />
              </ScrollArrow>
            </ScrollBar>
            <PanelHandle aria-label="Masquer le panneau">
              <svg width="5" height="18" viewBox="5 0 5 18">
                {icons.dots}
              </svg>
            </PanelHandle>
          </SidePanel>

          <Viewports>
            <Pane $edges="0 1px 1px 0">
              <FrontDrawing />
              <HeadsUpBar>
                {hudItems.map((icon, i) => (
                  <HudButton key={i} $narrow={icon === "smallCaret"} aria-label={icon}>
                    <Icon name={icon} size={icon === "smallCaret" ? 9 : 12} />
                  </HudButton>
                ))}
              </HeadsUpBar>
              <ViewName>
                <Icon name="chain" size={11} />
                *Face
              </ViewName>
            </Pane>
            <Pane $edges="0 0 1px 1px">
              <LeftDrawing />
              <DocControls>
                {["tileIn", "tileOut", "minimize", "restore", "close"].map((icon) => (
                  <HudButton key={icon} aria-label={icon}>
                    <Icon name={icon} />
                  </HudButton>
                ))}
              </DocControls>
              <TaskPane>
                {taskItems.map((icon) => (
                  <TaskButton key={icon} $active={icon === "ball"} aria-label={icon}>
                    <Icon name={icon} />
                  </TaskButton>
                ))}
              </TaskPane>
              <ViewName>
                <Icon name="chain" size={11} />
                *Gauche
              </ViewName>
            </Pane>
            <Pane $edges="1px 1px 0 0">
              <TopDrawing />
              <ViewName>
                <Icon name="chain" size={11} />
                *Dessus
              </ViewName>
            </Pane>
            <Pane $edges="1px 0 0 1px">
              <TrimetricDrawing />
              <ViewName>*Trimétrique</ViewName>
            </Pane>
          </Viewports>
        </WorkArea>

        <ModelTabs>
          <Steps>
            {["first", "prev", "next", "last"].map((icon) => (
              <StepButton key={icon} aria-label={icon}>
                <Icon name={icon} size={9} />
              </StepButton>
            ))}
          </Steps>
          {modelTabs.map(([label, width]) => (
            <ModelTab
              key={label}
              $width={width}
              $active={label === modelTab}
              onClick={() => setModelTab(label)}
            >
              {label}
            </ModelTab>
          ))}
        </ModelTabs>

        <StatusBar>
          <span>SOLIDWORKS Premium 2015 x64 Edition</span>
          <StatusItem $width={76}>MMGS</StatusItem>
          <StatusItem $width={12}>
            <Icon name="up" size={8} />
          </StatusItem>
          <StatusItem $width={24}>
            <Icon name="help" size={10} />
          </StatusItem>
          <StatusItem $width={28} $gap={23}>
            <Icon name="tag" />
          </StatusItem>
          <Icon name="gripCorner" size={9} />
        </StatusBar>
      </AppWindow>
    </>
  );
};

export default App;
